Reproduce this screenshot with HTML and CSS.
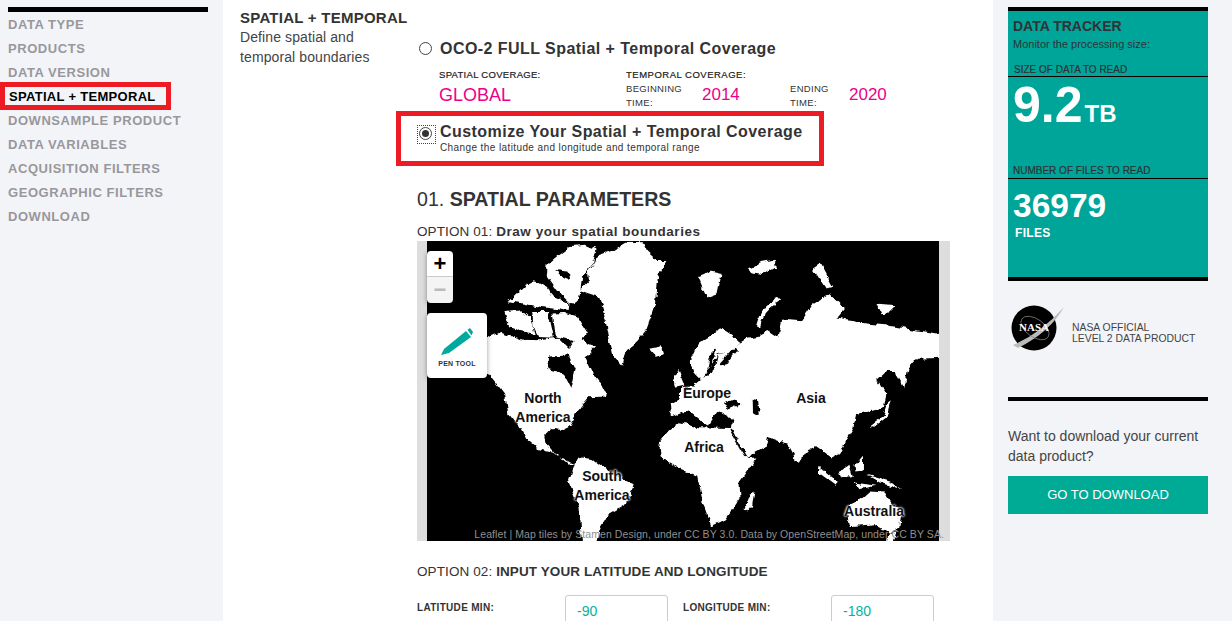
FILE: index.html
```html
<!DOCTYPE html>
<html lang="en">
<head>
    <meta charset="UTF-8">
    <title>OCO-2 Data Product - Spatial + Temporal</title>
    <link rel="stylesheet" href="styles.css">
</head>
<body>

<div class="page">
    <!-- left step list -->
    <aside class="sidebar">
        <ul class="steps">
            <li>DATA TYPE</li>
            <li>PRODUCTS</li>
            <li>DATA VERSION</li>
            <li class="active">SPATIAL + TEMPORAL</li>
            <li>DOWNSAMPLE PRODUCT</li>
            <li>DATA VARIABLES</li>
            <li>ACQUISITION FILTERS</li>
            <li>GEOGRAPHIC FILTERS</li>
            <li>DOWNLOAD</li>
        </ul>
    </aside>

    <main class="main">
        <div class="intro">
            <h2>SPATIAL + TEMPORAL</h2>
            <p>Define spatial and temporal boundaries</p>
        </div>

        <div class="content">
            <label class="choice choice-full">
                <span class="radio"></span>
                <span class="choice-title">OCO-2 FULL Spatial + Temporal Coverage</span>
            </label>

            <div class="coverage">
                <div class="cov-spatial">
                    <div class="cov-label">SPATIAL COVERAGE:</div>
                    <div class="cov-global">GLOBAL</div>
                </div>
                <div class="cov-temporal">
                    <div class="cov-label cov-label-wide">TEMPORAL COVERAGE:</div>
                    <div class="cov-times">
                        <span class="cov-time cov-begin">BEGINNING TIME:</span>
                        <span class="cov-year cov-year-begin">2014</span>
                        <span class="cov-time cov-end">ENDING TIME:</span>
                        <span class="cov-year">2020</span>
                    </div>
                </div>
            </div>

            <label class="choice choice-custom">
                <span class="radio checked"></span>
                <span>
                    <span class="choice-title">Customize Your Spatial + Temporal Coverage</span>
                    <span class="choice-sub">Change the latitude and longitude and temporal range</span>
                </span>
            </label>

            <h3 class="section-title">01. <b>SPATIAL PARAMETERS</b></h3>
            <div class="option-title option-one">OPTION 01: <b>Draw your spatial boundaries</b></div>

            <div class="map">
                <div class="tiles">
                    <svg class="world" viewBox="21 3 1514 897" preserveAspectRatio="none">
                        <defs>
                            <filter id="coast" x="0" y="0" width="1600" height="920" filterUnits="userSpaceOnUse" primitiveUnits="userSpaceOnUse" color-interpolation-filters="sRGB">
                                <feTurbulence type="fractalNoise" baseFrequency="0.045" numOctaves="3" seed="7" result="noise"/>
                                <feDisplacementMap in="SourceGraphic" in2="noise" scale="18" xChannelSelector="R" yChannelSelector="G"/>
                            </filter>
                        </defs>
                        <rect x="21" y="3" width="1514" height="897" fill="#000"/>
                        <g filter="url(#coast)">
                            <g fill="#fff">
                                <!-- greenland + arctic islands -->
                                <polygon points="497,95 530,45 575,30 610,8 660,10 672,35 700,60 730,60 712,95 700,125 695,195 668,270 640,305 612,330 598,376 572,345 555,270 545,225 530,170 500,160 472,150 500,120"/>
                                <polygon points="378,72 410,45 445,18 490,14 522,28 512,70 480,112 470,180 445,190 405,152 375,110"/>
                                <polygon points="262,183 285,160 310,135 340,120 372,140 395,170 442,190 440,212 395,205 360,200 305,190"/>
                                <polygon points="250,215 300,210 326,235 340,280 300,272 265,262"/>
                                <polygon points="332,212 378,212 396,292 350,290 336,262"/>
                                <polygon points="392,220 430,218 465,228 492,272 478,308 440,298 402,288"/>
                                <!-- north america -->
                                <polygon points="60,320 198,292 240,274 268,285 305,298 350,300 410,292 440,322 462,290 478,298 518,320 490,352 510,395 532,425 553,468 500,470 468,510 442,560 425,568 385,565 368,585 372,610 398,640 420,650 450,668 440,672 405,640 350,625 318,598 300,565 262,520 252,462 205,402 100,390"/>
                                <!-- south america -->
                                <polygon points="455,665 480,650 510,655 560,692 632,730 612,790 555,825 530,870 520,910 480,910 472,800 438,720"/>
                                <!-- africa -->
                                <polygon points="708,605 735,570 765,548 825,560 918,562 945,625 968,652 995,650 965,695 945,725 948,770 905,835 862,856 838,790 820,705 765,682 712,650"/>
                                <polygon points="975,762 990,752 982,795 968,812 960,805"/>
                                <!-- eurasia -->
                                <polygon points="945,308 965,295 1000,290 1030,272 1060,292 1072,235 1130,240 1160,195 1212,160 1258,205 1232,235 1320,250 1380,255 1440,265 1560,285 1560,352 1470,355 1445,385 1432,440 1405,395 1378,395 1350,420 1380,458 1372,500 1320,515 1290,520 1282,560 1258,600 1240,640 1218,650 1170,615 1142,630 1118,668 1088,612 1030,590 1022,620 968,650 935,610 918,568 925,535 880,510 850,555 820,530 795,510 745,530 742,490 772,470 772,440 810,438 835,415 868,395 880,345 920,325"/>
                                <polygon points="798,365 825,310 888,264 948,305 920,330 880,342 855,385 832,420 812,400"/>
                                <polygon points="748,420 765,392 782,435 752,442"/>
                                <polygon points="678,325 715,318 722,338 695,346"/>
                                <polygon points="822,112 862,95 892,102 880,160 848,172"/>
                                <polygon points="970,88 1010,65 1050,60 1052,82 1015,105 985,100"/>
                                <polygon points="1162,85 1185,70 1222,140 1200,145"/>
                                <polygon points="1350,190 1410,195 1385,220 1365,222"/>
                                <!-- japan, islands -->
                                <polygon points="1335,552 1370,525 1382,490 1392,482 1380,530 1335,565"/>
                                <polygon points="1285,675 1310,645 1310,690 1288,692"/>
                                <polygon points="1182,678 1238,725 1228,732 1178,695"/>
                                <polygon points="1240,695 1270,672 1280,705 1248,712"/>
                                <polygon points="1320,702 1390,722 1420,745 1360,725"/>
                                <polygon points="1285,725 1350,735 1300,745"/>
                                <!-- australia -->
                                <polygon points="1262,800 1300,780 1330,752 1375,755 1395,790 1428,812 1420,860 1388,875 1345,850 1268,856"/>
                                <polygon points="1385,878 1410,870 1400,910 1380,910"/>
                            </g>
                            <g fill="#000">
                                <polygon points="382,348 440,345 458,385 445,442 425,402 380,388"/>
                                <polygon points="895,490 925,476 952,490 915,506"/>
                                <polygon points="984,475 1000,480 1006,528 985,515"/>
                                <polygon points="400,90 440,95 445,120 420,110"/>
                                <polygon points="370,590 400,565 435,580 420,608 395,620"/>
                                <polygon points="862,335 876,330 856,388 848,392"/>
                                <polygon points="885,372 930,322 940,330 900,380"/>
                            </g>
                            <path d="M918 565 L962 645" fill="none" stroke="#000" stroke-width="6"/>
                            <path d="M1000 258 Q1012 205 1065 174" fill="none" stroke="#fff" stroke-width="12"/>
                        </g>
                    </svg>
                    <span class="place p-north">North</span>
                    <span class="place p-namerica">America</span>
                    <span class="place p-south">South</span>
                    <span class="place p-samerica">America</span>
                    <span class="place p-europe">Europe</span>
                    <span class="place p-africa">Africa</span>
                    <span class="place p-asia">Asia</span>
                    <span class="place p-australia">Australia</span>
                </div>
                <div class="zoom-box">
                    <div class="zoom-in">+</div>
                    <div class="zoom-out">&minus;</div>
                </div>
                <div class="pen-tool">
                    <svg class="pen-icon" width="34" height="30" viewBox="0 0 34 30">
                        <path d="M1 28 L4 22 L26 4 L31 10 L9 26 Z" fill="#00a99d"/>
                        <path d="M27.5 2.8 L30 1 L33 5 L31.5 8.5 Z" fill="#00a99d"/>
                    </svg>
                    <span>PEN TOOL</span>
                </div>
                <div class="attribution">Leaflet | Map tiles by Stamen Design, under CC BY 3.0. Data by OpenStreetMap, under CC BY SA.</div>
            </div>

            <div class="option-title option-two">OPTION 02: <b>INPUT YOUR LATITUDE AND LONGITUDE</b></div>

            <div class="latlon">
                <label class="ll-label">LATITUDE MIN:</label>
                <input class="ll-input" type="text" value="-90">
                <label class="ll-label ll-label-right">LONGITUDE MIN:</label>
                <input class="ll-input" type="text" value="-180">
            </div>
        </div>
    </main>

    <!-- right tracker -->
    <aside class="tracker-col">
        <div class="tracker">
            <div class="tracker-title">DATA TRACKER</div>
            <div class="tracker-sub">Monitor the processing size:</div>
            <div class="tracker-label label-size">SIZE OF DATA TO READ</div>
            <div class="big-size">9.2<span>TB</span></div>
            <div class="tracker-label label-files">NUMBER OF FILES TO READ</div>
            <div class="big-files">36979</div>
            <div class="files-word">FILES</div>
        </div>

        <div class="nasa">
            <div class="meatball">
                <svg width="54" height="48" viewBox="0 0 54 48">
                    <circle cx="24" cy="24" r="22.5" fill="#000"/>
                    <path d="M3 41 Q30 30 54 3 Q40 28 8 44 Z" fill="#bbb"/>
                    <ellipse cx="25" cy="24" rx="16" ry="9" fill="none" stroke="#888" stroke-width="0.7" transform="rotate(35 25 24)"/>
                </svg>
                <span>NASA</span>
            </div>
            <div class="nasa-text">NASA OFFICIAL<br>LEVEL 2 DATA PRODUCT</div>
        </div>

        <div class="go-block">
            <p>Want to download your current data product?</p>
            <div class="go-button">GO TO DOWNLOAD</div>
        </div>
    </aside>
</div>

<!-- red annotation boxes -->
<div class="mark mark-nav"></div>
<div class="mark mark-custom"></div>

</body>
</html>
```

FILE: styles.css
```css
* {
    margin: 0;
    padding: 0;
    box-sizing: border-box;
}

html, body {
    height: 100vh;
    overflow: hidden;
}

body {
    font-family: 'Liberation Sans', Arial, sans-serif;
    color: #333;
    background: #fff;
}

.page {
    display: flex;
    height: 100vh;
}

/* sidebar */
.sidebar {
    width: 223px;
    flex: none;
    background: #f3f4f8;
    padding: 7px 15px 0 8px;
}

.steps {
    list-style: none;
    border-top: 5px solid #000;
}

.steps li {
    height: 24px;
    padding-top: 1px;
    line-height: 24px;
    font-size: 13px;
    font-weight: bold;
    letter-spacing: 0.55px;
    color: #98989c;
}

.steps li.active {
    color: #000;
    padding-left: 1px;
    letter-spacing: 0.3px;
}

/* main column */
.main {
    flex: 1;
    display: flex;
    padding: 0 0 0 17px;
    background: #fff;
}

.intro {
    width: 177px;
    flex: none;
    padding-top: 9px;
}

.intro h2 {
    font-size: 15px;
    line-height: 18px;
    letter-spacing: 0.25px;
    white-space: nowrap;
}

.intro p {
    font-size: 14px;
    line-height: 20px;
    letter-spacing: 0.1px;
    width: 140px;
    color: #444;
}

.content {
    width: 533px;
    flex: none;
    padding-top: 39px;
}

.choice {
    display: flex;
    align-items: flex-start;
    gap: 8px;
    padding-left: 2px;
}

.radio {
    width: 13px;
    height: 13px;
    border: 1px solid #444;
    border-radius: 50%;
    flex: none;
    margin-top: 3px;
    background: #fff;
    position: relative;
}

.radio.checked {
    margin-top: 5px;
}

.radio.checked::before {
    content: "";
    position: absolute;
    left: -3px;
    top: -3px;
    width: 17px;
    height: 17px;
    border: 1px dotted #444;
}

.radio.checked::after {
    content: "";
    position: absolute;
    left: 2px;
    top: 2px;
    width: 7px;
    height: 7px;
    border-radius: 50%;
    background: #333;
}

.choice-title {
    display: block;
    font-size: 16px;
    line-height: 19px;
    font-weight: bold;
    letter-spacing: 0.45px;
    white-space: nowrap;
}

.choice-sub {
    display: block;
    font-size: 10px;
    line-height: 12px;
    padding-top: 1px;
    letter-spacing: 0.4px;
    color: #333;
}

.choice-custom {
    margin-top: 12px;
}

.coverage {
    display: flex;
    padding: 10px 0 0 22px;
}

.cov-spatial {
    width: 187px;
    flex: none;
}

.cov-label {
    font-size: 9.5px;
    line-height: 13px;
    letter-spacing: 0.3px;
    color: #222;
    -webkit-text-stroke: 0.2px #222;
    white-space: nowrap;
}

.cov-label-wide {
    letter-spacing: 0.5px;
}

.cov-global {
    font-size: 18px;
    line-height: 22px;
    color: #ec008c;
    margin-top: 3px;
}

.cov-times {
    display: flex;
    align-items: center;
    margin-top: 1px;
}

.cov-time {
    font-size: 9.5px;
    line-height: 14px;
    letter-spacing: 0.3px;
    color: #333;
    width: 76px;
    flex: none;
    padding-right: 16px;
}

.cov-end {
    width: 59px;
    padding-right: 20px;
}

.cov-year {
    font-size: 17px;
    line-height: 20px;
    color: #ec008c;
    margin-top: -2px;
}

.cov-year-begin {
    width: 88px;
    flex: none;
}

.section-title {
    font-size: 19.6px;
    line-height: 24px;
    font-weight: normal;
    margin-top: 33px;
}

.option-title {
    font-size: 13.5px;
    line-height: 16px;
    letter-spacing: 0.1px;
}

.option-one {
    margin-top: 13px;
}

.option-one b {
    letter-spacing: 0.55px;
}

/* map */
.map {
    position: relative;
    width: 533px;
    height: 300px;
    margin-top: 1px;
    background: #ddd;
    padding: 0 11px 0 10px;
}

.tiles {
    position: relative;
    width: 512px;
    height: 300px;
    background: #000;
}

.world {
    display: block;
    width: 512px;
    height: 300px;
}

.place {
    position: absolute;
    transform: translateX(-50%);
    font-size: 14px;
    line-height: 16px;
    font-weight: bold;
    color: #111;
    white-space: nowrap;
    text-shadow: 0 0 2px #fff, 0 0 2px #fff, 0 0 3px #fff;
}

.p-north { left: 116px; top: 149px; }
.p-namerica { left: 116px; top: 168px; }
.p-south { left: 175px; top: 227px; }
.p-samerica { left: 175px; top: 246px; }
.p-europe { left: 280px; top: 144px; }
.p-africa { left: 277px; top: 198px; }
.p-asia { left: 384px; top: 149px; }
.p-australia { left: 447px; top: 262px; }

.zoom-box {
    position: absolute;
    left: 10px;
    top: 10px;
    width: 26px;
    height: 52px;
    border-radius: 4px;
    overflow: hidden;
    box-shadow: 0 1px 5px rgba(0, 0, 0, 0.4);
}

.zoom-in, .zoom-out {
    height: 26px;
    line-height: 25px;
    text-align: center;
    font-size: 22px;
    font-weight: bold;
}

.zoom-in {
    background: #fff;
    color: #000;
    border-bottom: 1px solid #ccc;
}

.zoom-out {
    background: #f4f4f4;
    color: #bbb;
}

.pen-tool {
    position: absolute;
    left: 10px;
    top: 72px;
    width: 60px;
    height: 65px;
    background: #fff;
    border-radius: 4px;
    box-shadow: 0 1px 5px rgba(0, 0, 0, 0.4);
    display: flex;
    flex-direction: column;
    align-items: center;
    padding-top: 14px;
}

.pen-tool span {
    font-size: 7px;
    line-height: 10px;
    font-weight: bold;
    letter-spacing: 0.2px;
    margin-top: 2px;
    color: #333;
}

.attribution {
    position: absolute;
    right: 6px;
    bottom: 0;
    font-size: 10.5px;
    line-height: 13px;
    letter-spacing: 0.08px;
    color: #8f8f8f;
    white-space: nowrap;
}

.option-two {
    margin-top: 23px;
}

.latlon {
    display: grid;
    grid-template-columns: 148px 103px 163px 103px;
    margin-top: 15px;
}

.ll-label {
    font-size: 10px;
    font-weight: bold;
    line-height: 22px;
    letter-spacing: 0.3px;
    color: #333;
    padding-top: 2px;
}

.ll-label-right {
    padding-left: 15px;
}

.ll-input {
    width: 103px;
    height: 40px;
    border: 1px solid #ccc;
    border-radius: 3px;
    padding: 0 11px 8px;
    font: 14px 'Liberation Sans', Arial, sans-serif;
    color: #00b3a6;
}

/* right column */
.tracker-col {
    width: 239px;
    flex: none;
    background: #f3f4f8;
    padding: 7px 24px 0 15px;
}

.tracker {
    width: 200px;
    height: 274px;
    background: #00a599;
    border-top: 4px solid #000;
    border-bottom: 4px solid #000;
    padding-top: 7px;
}

.tracker-title {
    font-size: 14px;
    line-height: 16px;
    font-weight: bold;
    padding-left: 5px;
    color: #2f3236;
}

.tracker-sub {
    font-size: 11px;
    line-height: 12px;
    padding-left: 5px;
    margin-top: 4px;
    color: #2f3236;
}

.tracker-label {
    font-size: 10px;
    line-height: 12px;
    padding-left: 5px;
    padding-bottom: 1px;
    border-bottom: 1px solid #000;
    color: #2f3236;
    -webkit-text-stroke: 0.2px #2f3236;
}

.label-size {
    margin-top: 14px;
    padding-left: 6px;
    padding-bottom: 0;
}

.label-files {
    margin-top: 25px;
}

.big-size {
    font-size: 50px;
    line-height: 52px;
    font-weight: bold;
    color: #fff;
    padding-left: 5px;
    margin-top: 2px;
}

.big-size span {
    font-size: 24px;
    font-weight: bold;
    margin-left: 2px;
}

.big-files {
    font-size: 33.5px;
    line-height: 38px;
    font-weight: bold;
    color: #fff;
    padding-left: 5px;
    margin-top: 8px;
}

.files-word {
    font-size: 12px;
    line-height: 14px;
    font-weight: bold;
    letter-spacing: 0.3px;
    color: #fff;
    padding-left: 7px;
    margin-top: 1px;
}

.nasa {
    display: flex;
    align-items: center;
    height: 120px;
    border-bottom: 4px solid #000;
    width: 200px;
    padding-bottom: 23px;
}

.meatball {
    position: relative;
    width: 54px;
    height: 48px;
    margin-left: 2px;
    flex: none;
}

.meatball svg {
    display: block;
}

.meatball span {
    position: absolute;
    left: 2px;
    top: 17px;
    width: 44px;
    text-align: center;
    font-family: 'Liberation Serif', serif;
    font-size: 11px;
    line-height: 13px;
    font-weight: bold;
    color: #fff;
}

.nasa-text {
    font-size: 10.4px;
    line-height: 11px;
    color: #444;
    margin-left: 8px;
    margin-top: 10px;
    white-space: nowrap;
}

.go-block {
    width: 200px;
    padding-top: 25px;
}

.go-block p {
    font-size: 14px;
    line-height: 20px;
    color: #444;
}

.go-button {
    margin-top: 10px;
    height: 38px;
    line-height: 37px;
    background: #00ab96;
    color: #fff;
    text-align: center;
    font-size: 13px;
}

/* annotation boxes */
.mark {
    position: absolute;
    border: 5px solid #ed1c24;
}

.mark-nav {
    left: 0;
    top: 82px;
    width: 171px;
    height: 28px;
}

.mark-custom {
    left: 396px;
    top: 111px;
    width: 428px;
    height: 55px;
}
```
